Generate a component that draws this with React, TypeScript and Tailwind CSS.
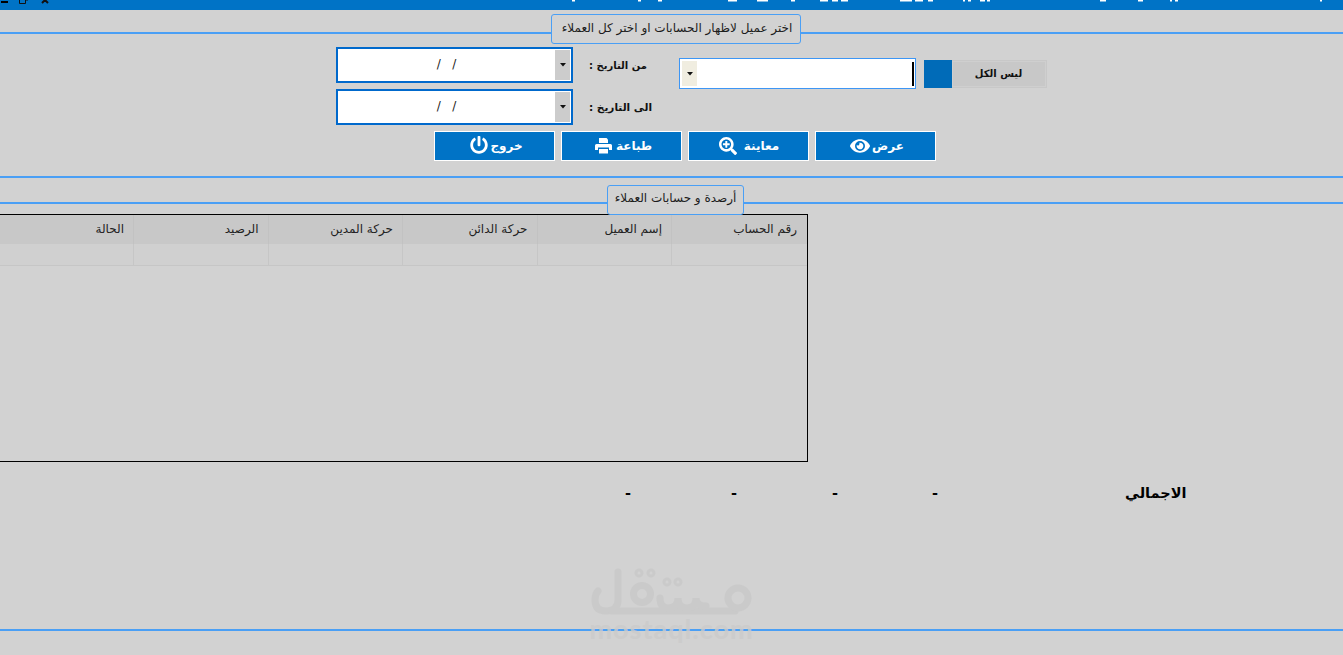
import { FaEye, FaSearchPlus, FaPowerOff } from "react-icons/fa";

const font = { fontFamily: '"DejaVu Sans", "Liberation Sans", sans-serif' };

function Legend({ text, left, width, top, lineAt, pad }: { text: string; left: string; width: string; top: string; lineAt: string; pad: string }) {
  return (
    <div className={`flex items-start ${top}`}>
      <div className={`h-[2px] bg-[#4a9ff5] ${left} ${lineAt}`} />
      <div dir="rtl" className={`h-[30px] ${width} ${pad} flex items-center justify-center rounded-[3px] border border-[#4a9ff5] text-[12px] text-[#1c1c1c]`}>
        {text}
      </div>
      <div className={`h-[2px] flex-1 bg-[#4a9ff5] ${lineAt}`} />
    </div>
  );
}

function Caret() {
  return (
    <svg width="6" height="4" viewBox="0 0 6 4">
      <path d="M0 0H6L3 3.5Z" fill="#111" />
    </svg>
  );
}

function DateBox() {
  return (
    <div className="flex h-[36px] w-[237px] shrink-0 items-center border-2 border-[#0069cc] bg-white pr-[1px]">
      <span className="flex-1 whitespace-pre pb-[2px] text-center text-[12px] text-[#222]">{"/   /"}</span>
      <span className="flex h-[30px] w-[15px] items-center justify-center bg-[#cccccc]">
        <Caret />
      </span>
    </div>
  );
}

function ActionButton({ label, icon, gap, pad }: { label: string; icon: React.ReactNode; gap: string; pad: string }) {
  return (
    <button className={`flex h-[30px] w-[121px] items-center justify-center ${gap} ${pad} border border-white bg-[#0073c6] text-[12px] font-bold text-white`}>
      {icon}
      <span dir="rtl">{label}</span>
    </button>
  );
}

function PrintIcon() {
  return (
    <svg width="17" height="16" viewBox="0 0 17 16" fill="#fff">
      <path d="M4 0H11.5L13 1.5V5H4Z" />
      <path d="M1.5 6H15.5Q17 6 17 7.5V12H14V9.5H3V12H0V7.5Q0 6 1.5 6Z" />
      <path d="M4 11H13V15.5H4Z" />
    </svg>
  );
}

const ticks: [number, number][] = [
  [572, 3], [638, 3], [658, 4], [728, 9], [757, 11], [791, 4], [820, 8], [832, 6], [841, 7], [900, 12], [915, 8], [928, 5],
  [963, 2], [968, 3], [980, 5], [987, 3], [1100, 6], [1138, 5], [1170, 2], [1175, 3], [1320, 2],
];

const columns = ["", "الحالة", "الرصيد", "حركة المدين", "حركة الدائن", "إسم العميل", "رقم الحساب"];

export default function App() {
  return (
    <div style={font} className="h-[655px] w-[1343px] overflow-hidden bg-[#d2d2d2]">
      <div className="h-[10px] overflow-hidden bg-[#0073c6]">
        <svg width="1343" height="10" viewBox="0 0 1343 10" className="block">
          <path d="M1 2H8" stroke="#000" strokeWidth="2" />
          <path d="M19.5 -1V3.5H25.5V-1M27 -1V1" stroke="#111" strokeWidth="1" fill="none" />
          <path d="M42 3L45 0L48 3" stroke="#111" strokeWidth="2" fill="none" />
          {ticks.map(([x, w]) => (
            <rect key={x} x={x} y="0" width={w} height="1.5" fill="#fff" />
          ))}
        </svg>
      </div>

      <Legend text="اختر عميل لاظهار الحسابات او اختر كل العملاء" left="w-[551px]" width="w-[250px]" top="mt-[4px]" lineAt="mt-[18px]" pad="pb-[2px] pl-[2px]" />

      <div className="mt-[3px] flex items-start pl-[336px]">
        <div className="flex w-[315px] flex-col gap-[6px]">
          <div className="flex items-center">
            <DateBox />
            <span dir="rtl" className="ml-[16px] whitespace-nowrap text-[10px] font-bold text-[#111]">من التاريخ :</span>
          </div>
          <div className="flex items-center">
            <DateBox />
            <span dir="rtl" className="ml-[16px] mt-[2px] whitespace-nowrap text-[10.5px] font-bold text-[#111]">الى التاريخ :</span>
          </div>
        </div>
        <div className="ml-[28px] mt-[11px] flex h-[31px] w-[237px] items-center border border-[#3d96f5] bg-white pl-[2px] pr-[1px]">
          <span className="flex h-[25px] w-[15px] items-center justify-center bg-[#f0ede0]">
            <Caret />
          </span>
          <span className="ml-auto h-[24px] w-[2px] bg-black" />
        </div>
        <div className="ml-[8px] mt-[13px] flex h-[28px] w-[123px] border border-[#c8c8c8]">
          <span className="-my-[1px] -ml-[1px] w-[28px] bg-[#006bb8]" />
          <span dir="rtl" className="flex-1 border border-[#cfcfcf] bg-[#c8c8c8] pr-[1px] text-center text-[10px] font-bold leading-[24px] text-[#111]">ليس الكل</span>
        </div>
      </div>

      <div className="mt-[6px] flex gap-[6px] pl-[434px]">
        <ActionButton label="خروج" gap="gap-[2px]" pad="pl-[4px]" icon={<FaPowerOff size={18} className="-mt-[3px]" />} />
        <ActionButton label="طباعة" gap="gap-[4px]" pad="pl-[4px]" icon={<PrintIcon />} />
        <ActionButton label="معاينة" gap="gap-[7px]" pad="pl-[1px]" icon={<FaSearchPlus size={18} />} />
        <ActionButton label="عرض" gap="gap-[2px]" pad="pl-[3px]" icon={<FaEye size={20} />} />
      </div>

      <div className="mt-[15px] h-[2px] bg-[#4a9ff5]" />

      <Legend text="أرصدة و حسابات العملاء" left="w-[607px]" width="w-[137px]" top="mt-[7px]" lineAt="mt-[17px]" pad="pb-[4px]" />

      <div className="-mt-[1px] flex h-[248px] w-[808px] flex-col items-end overflow-hidden border border-l-0 border-black">
        <div className="flex h-[29px] shrink-0 bg-[#c8c8c8]">
          {columns.map((c, i) => (
            <div dir="rtl" key={c} className={`flex shrink-0 items-center justify-start border-l border-[#c2c2c2] pb-[1px] text-[12px] text-[#222] ${i === 6 ? "w-[136px] pr-[10px]" : "w-[134.5px] pr-[9px]"}`}>
              {c}
            </div>
          ))}
        </div>
        <div className="flex h-[22px] shrink-0 self-stretch justify-end border-b border-[#c6c6c6] bg-[#d0d0d0]">
          {columns.map((c, i) => (
            <div key={c} className={`shrink-0 border-l border-[#c6c6c6] ${i === 6 ? "w-[136px]" : "w-[134.5px]"}`} />
          ))}
        </div>
      </div>

      <div className="mt-[22px] flex h-[20px] items-center text-[14.5px] font-bold text-black">
        <span className="ml-[625px] w-[106px]">-</span>
        <span className="w-[101px]">-</span>
        <span className="w-[100px]">-</span>
        <span className="w-[193px]">-</span>
        <span dir="rtl">الاجمالي</span>
      </div>

      <div className="relative mt-[125px] h-[2px] bg-[#4a9ff5]">
        <div className="absolute left-[590px] top-[-61px] flex w-[163px] flex-col items-center opacity-80">
          <svg width="163" height="50" viewBox="590 568 163 50" fill="none" stroke="#c9c9c9" strokeWidth="7" strokeLinecap="round">
            <path d="M618 572V600Q618 611 606 611Q595 611 595 600Q595 594 598 591" />
            <path d="M612 611H735" />
            <circle cx="642" cy="594" r="8.5" />
            <path d="M660 598Q660 608 668 608Q678 608 678 598Q678 608 687 608Q696 608 696 598Q696 606 706 606" />
            <circle cx="738" cy="598" r="10" />
            <circle cx="639" cy="573" r="1.5" strokeWidth="6" />
            <circle cx="651" cy="573" r="1.5" strokeWidth="6" />
            <circle cx="667" cy="582" r="1.5" strokeWidth="6" />
            <circle cx="678" cy="582" r="1.5" strokeWidth="6" />
          </svg>
          <span className="-mt-[2px] whitespace-nowrap text-[27px] leading-[26px] font-bold tracking-[1px] text-[#cbcbcb]" style={{ fontFamily: '"Lato", sans-serif' }}>mostaql.com</span>
        </div>
      </div>
    </div>
  );
}
